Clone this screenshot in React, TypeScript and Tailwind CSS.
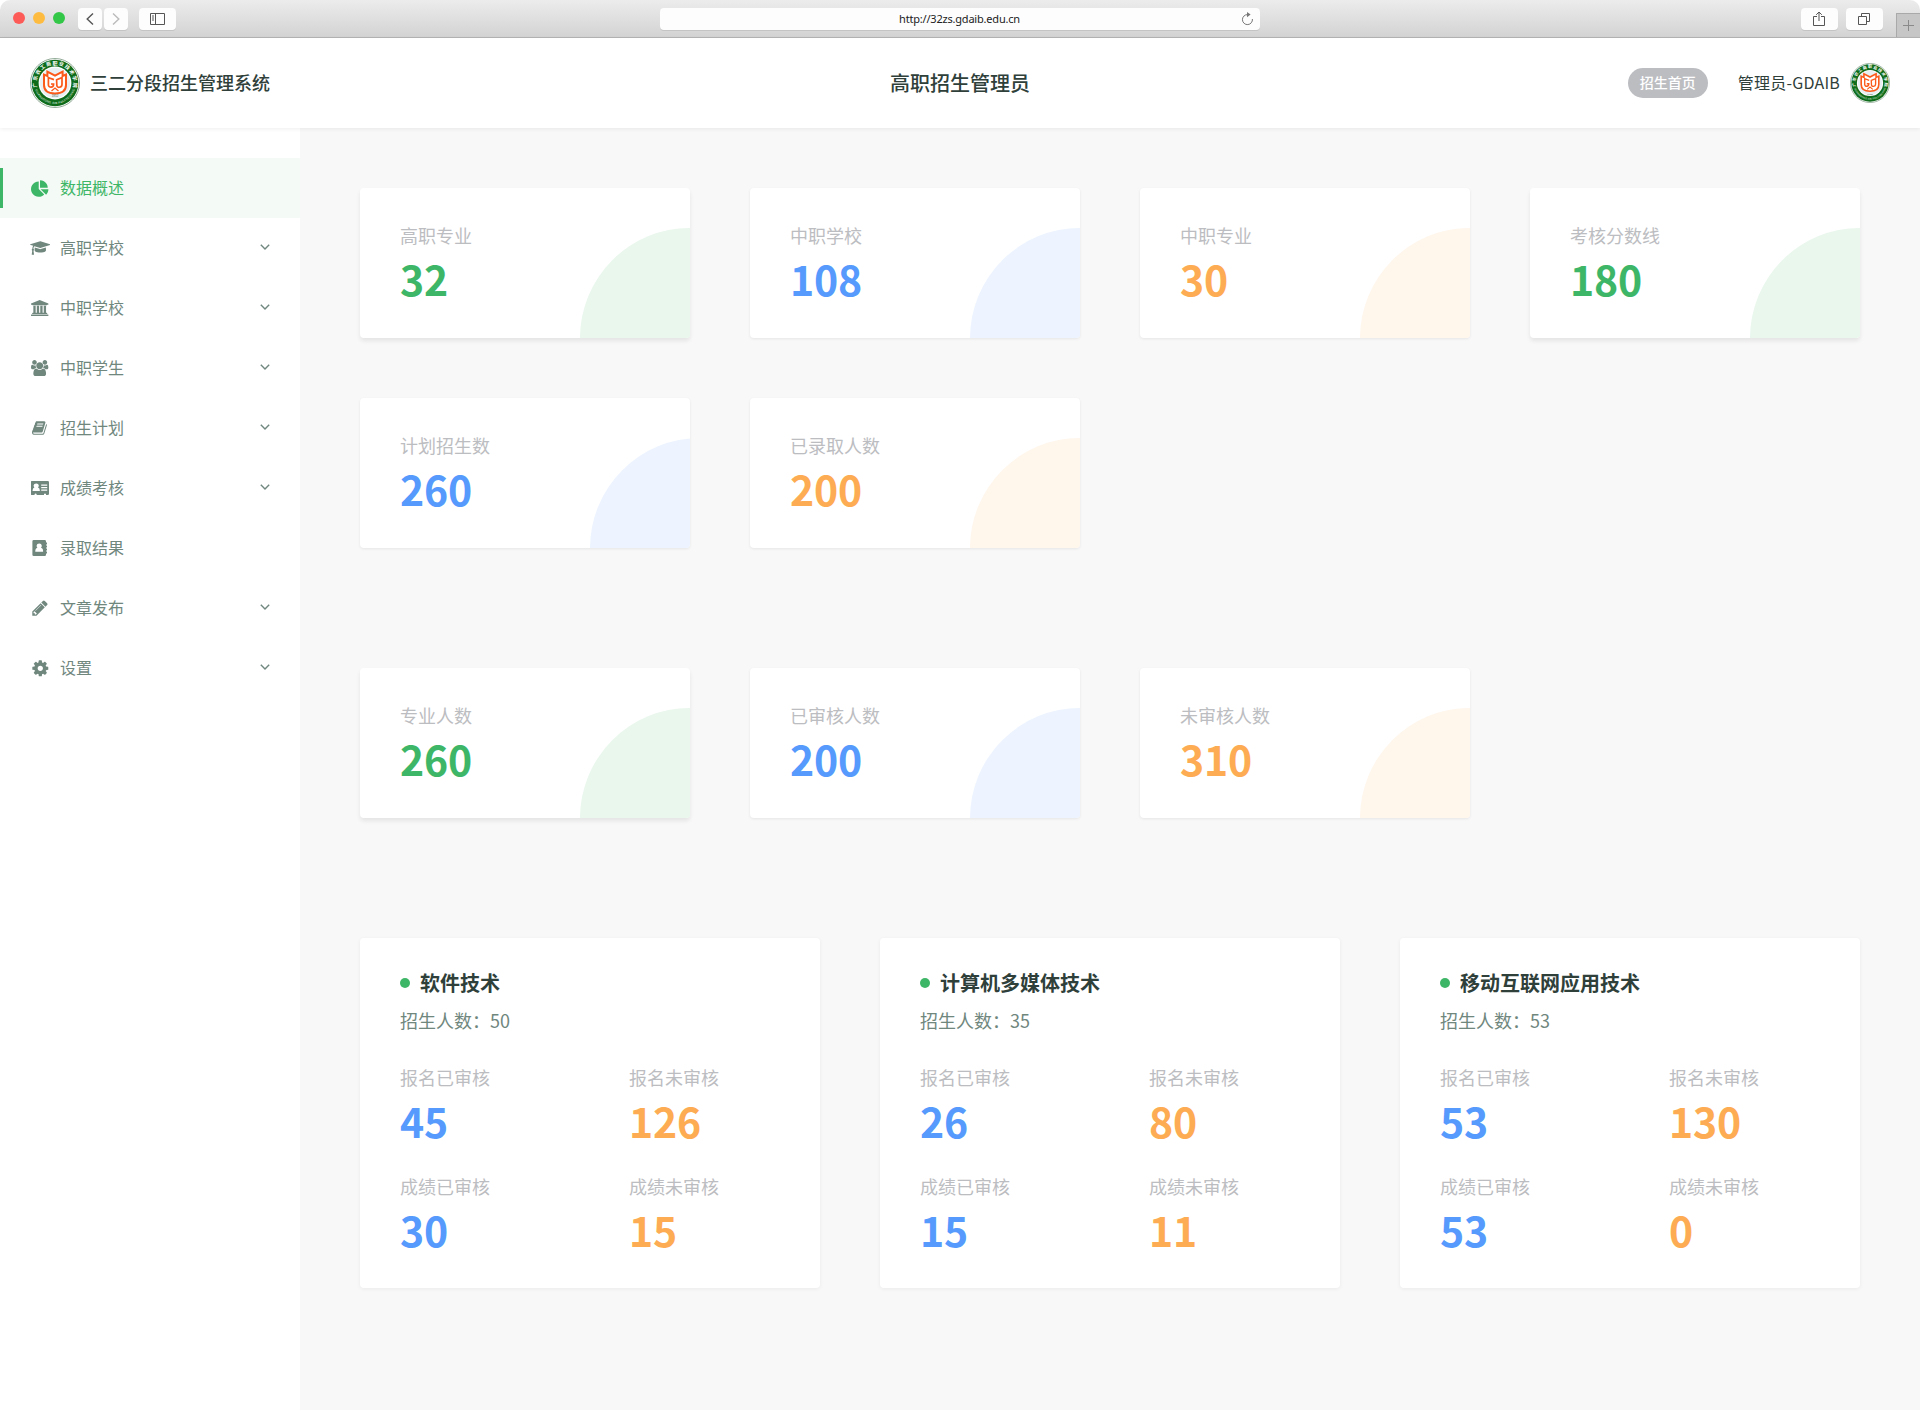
import React from "react";

type Tone = "green" | "blue" | "orange";

const TEXT: Record<Tone, string> = {
  green: "text-[#3eb667]",
  blue: "text-[#559afc]",
  orange: "text-[#fdac53]",
};
const FILL: Record<Tone, string> = {
  green: "bg-[#e9f7ed]",
  blue: "bg-[#edf4ff]",
  orange: "bg-[#fff6ec]",
};
const SHADOW: Record<Tone, string> = {
  green: "shadow-[0_3px_4px_rgba(0,0,0,0.08)]",
  blue: "shadow-[0_1px_3px_rgba(0,0,0,0.08)]",
  orange: "shadow-[0_1px_3px_rgba(0,0,0,0.08)]",
};

function Seal({ size }: { size: number }) {
  return (
    <svg width={size} height={size} viewBox="0 0 50 50">
      <defs>
        <path id="sealTop" d="M8.6 33 A18.3 18.3 0 1 1 41.4 33" />
        <path id="sealBottom" d="M4.4 28 A20.8 20.8 0 0 0 45.6 28" />
      </defs>
      <circle cx="25" cy="25" r="24.5" fill="#fff" stroke="#86a28c" strokeWidth="0.9" />
      <circle cx="25" cy="25" r="23.3" fill="#0d6b1a" />
      <circle cx="25" cy="25" r="16.4" fill="#fff" />
      <circle cx="25" cy="25" r="15.2" fill="#e9f0f4" />
      <text fontSize="5" fontWeight="700" fill="#fff" fontFamily="Noto Sans CJK SC, sans-serif">
        <textPath href="#sealTop" startOffset="4" textLength="66">广东农工商职业技术学院</textPath>
      </text>
      <text fontSize="3" fontWeight="700" fill="#b9d6bd" fontFamily="Liberation Sans, sans-serif">
        <textPath href="#sealBottom" startOffset="4" textLength="52">GUANGDONG AIB POLYTECHNIC</textPath>
      </text>
      <g fill="none" stroke="#fb5a1a" strokeWidth="2">
        <path d="M14 16.6 L17.4 18 V13.6 L25 17.6 L32.6 13.6 V18 L36 16.6 V27 C36 33 31 35.4 25 35.4 C19 35.4 14 33 14 27 Z" fill="#fff" />
        <path d="M24 21.6 L18.4 19.6 V27 C18.4 29.6 23.6 30.4 23.6 26 H21" strokeWidth="1.7" />
        <path d="M26.6 21.8 L32 19.6 V26.5 C32 29.6 26.8 30.6 26.8 27 Z" strokeWidth="1.7" />
        <path d="M21.5 33 L25 30 L28.5 33" strokeWidth="1.3" />
      </g>
      <text x="25" y="39.4" fontSize="3" textAnchor="middle" fill="#4d6b52" fontFamily="Liberation Sans, sans-serif">1952</text>
    </svg>
  );
}

function BrowserBar() {
  return (
    <div className="bg-white">
      <div className="flex h-[38px] shrink-0 items-start rounded-t-[10px] border-b border-[#b4b4b4] bg-linear-to-b from-[#ececec] to-[#d3d3d3] pt-2">
        <div className="ml-[13px] mt-1 flex gap-2">
          <span className="size-3 rounded-full bg-[#fc5b57]" />
          <span className="size-3 rounded-full bg-[#fdbc40]" />
          <span className="size-3 rounded-full bg-[#33c748]" />
        </div>
        <div className="ml-[13px] flex gap-0.5">
          <span className="flex h-[22px] w-6 items-center justify-center rounded bg-[#fdfdfd] shadow-[0_1px_0_#c4c4c4]">
            <svg width="8" height="12" viewBox="0 0 8 12" fill="none" stroke="#555" strokeWidth="1.4"><path d="M7 0.5 L1.2 6 L7 11.5" /></svg>
          </span>
          <span className="flex h-[22px] w-6 items-center justify-center rounded bg-[#fdfdfd] shadow-[0_1px_0_#c4c4c4]">
            <svg width="8" height="12" viewBox="0 0 8 12" fill="none" stroke="#bbb" strokeWidth="1.4"><path d="M1 0.5 L6.8 6 L1 11.5" /></svg>
          </span>
        </div>
        <span className="ml-[11px] flex h-[22px] w-[37px] items-center justify-center rounded bg-[#fdfdfd] shadow-[0_1px_0_#c4c4c4]">
          <svg width="15" height="12" viewBox="0 0 15 12" fill="none" stroke="#555"><path d="M0.5 0.5 H14.5 V11.5 H0.5 Z M5.5 0.5 V11.5 M2 3 H4 M2 5 H4 M2 7 H4" /></svg>
        </span>
        <div className="ml-[484px] flex h-[22px] w-[600px] items-center rounded bg-[#fdfdfd] pl-[18px] pr-[6px] shadow-[0_1px_0_#c4c4c4]">
          <span className="flex-1 pb-0.5 text-center font-['Noto_Sans'] text-[11px] leading-none tracking-[-0.2px] text-[#222]">http://32zs.gdaib.edu.cn</span>
          <svg width="13" height="14" viewBox="0 0 13 14" fill="none" stroke="#777"><path d="M6.5 2.6 A5 5 0 1 0 11.4 7" /><path d="M6 0 L9.6 2.6 L6 5.2 Z" fill="#777" stroke="none" /></svg>
        </div>
        <span className="ml-[541px] flex h-[22px] w-[37px] items-center justify-center rounded bg-[#fdfdfd] pr-px shadow-[0_1px_0_#c4c4c4]">
          <svg width="12" height="16" viewBox="0 0 12 16" fill="none" stroke="#555"><path d="M4 5.5 H0.5 V14.5 H11.5 V5.5 H8 M6 10 V1 M3.2 3.8 L6 1 L8.8 3.8" /></svg>
        </span>
        <span className="ml-2 flex h-[22px] w-[37px] items-center justify-center rounded bg-[#fdfdfd] pr-px shadow-[0_1px_0_#c4c4c4]">
          <svg width="12" height="12" viewBox="0 0 12 12" fill="none" stroke="#555"><path d="M0.5 3.5 H8.5 V11.5 H0.5 Z M3.5 3.5 V0.5 H11.5 V8.5 H8.5" /></svg>
        </span>
        <span className="ml-[13px] mt-[5px] flex h-6 w-6 items-center justify-center border-l border-t border-[#a9a9a9] bg-[#c6c6c6]">
          <svg width="11" height="11" viewBox="0 0 11 11" stroke="#8a8a8a"><path d="M0 5.5 H11 M5.5 0 V11" /></svg>
        </span>
      </div>
    </div>
  );
}

function Header() {
  return (
    <header className="relative z-10 grid h-[90px] shrink-0 grid-cols-3 items-center bg-white px-[30px] text-[#2f403a] shadow-[0_1px_4px_rgba(0,0,0,0.07)]">
      <div className="flex items-center gap-[10px]">
        <Seal size={50} />
        <span className="pb-0.5 text-lg font-medium">三二分段招生管理系统</span>
      </div>
      <h1 className="text-center text-xl font-medium">高职招生管理员</h1>
      <div className="flex items-center justify-end">
        <span className="flex h-[30px] w-20 items-center justify-center rounded-full bg-[#bcbdc1] pb-0.5 text-sm font-medium text-white">招生首页</span>
        <span className="ml-[30px] mr-[10px] pb-0.5 text-base tracking-[0.2px]">管理员-GDAIB</span>
        <Seal size={40} />
      </div>
    </header>
  );
}

const MENU = [
  {
    label: "数据概述", open: false, box: "0 0 1728 1664", w: 17.4, h: 17,
    d: "M768 890l546 546q-106 108-247.500 168t-298.500 60q-209 0-385.500-103t-279.500-279.500-103-385.500 103-385.500 279.500-279.500 385.500-103v762zm187 6h773q0 157-60 298.500t-168 247.500zm709-128h-768v-768q209 0 385.500 103t279.500 279.500 103 385.500z",
  },
  {
    label: "高职学校", open: true, box: "0 0 2304 1792", w: 20.6, h: 16,
    d: "M1774 836l18 316q4 69-82 128t-235 93.500-323 34.500-323-34.500-235-93.500-82-128l18-316 574 181q22 7 48 7t48-7zm530-324q0 23-22 31l-1120 352q-4 1-10 1t-10-1l-652-206q-43 34-71 111.500t-34 178.500q63 36 63 109 0 69-58 107l58 433q2 14-8 25-9 11-24 11h-192q-15 0-24-11-10-11-8-25l58-433q-58-38-58-107 0-73 65-111 11-207 98-330l-333-104q-22-8-22-31t22-31l1120-352q4-1 10-1t10 1l1120 352q22 8 22 31z",
  },
  {
    label: "中职学校", open: true, box: "0 0 1920 1792", w: 17.4, h: 16.2,
    d: "M960 0l960 384v128h-128q0 26-20.500 45t-48.500 19h-1526q-28 0-48.500-19t-20.500-45h-128v-128zm-704 640h256v768h128v-768h256v768h128v-768h256v768h128v-768h256v768h59q28 0 48.500 19t20.500 45v64h-1664v-64q0-26 20.500-45t48.500-19h59v-768zm1595 960q28 0 48.500 19t20.500 45v128h-1920v-128q0-26 20.500-45t48.500-19h1782z",
  },
  {
    label: "中职学生", open: true, box: "0 0 1920 1792", w: 17.4, h: 16.2,
    d: "M593 896q-162 5-265 128h-134q-82 0-138-40.500t-56-118.500q0-353 124-353 6 0 43.500 21t97.500 42.500 119 21.500q67 0 133-23-5 37-5 66 0 139 81 256zm1071 637q0 120-73 189.500t-194 69.500h-874q-121 0-194-69.500t-73-189.500q0-53 3.500-103.500t14-109 26.500-108.500 43-97.500 62-81 85.500-53.500 111.500-20q10 0 43 21.500t73 48 107 48 135 21.500 135-21.500 107-48 73-48 43-21.500q61 0 111.500 20t85.500 53.500 62 81 43 97.500 26.500 108.500 14 109 3.500 103.500zm-1024-1277q0 106-75 181t-181 75-181-75-75-181 75-181 181-75 181 75 75 181zm704 384q0 159-112.500 271.500t-271.500 112.500-271.500-112.500-112.500-271.500 112.500-271.500 271.500-112.500 271.500 112.500 112.500 271.500zm576 225q0 78-56 118.500t-138 40.500h-134q-103-123-265-128 81-117 81-256 0-29-5-66 66 23 133 23 59 0 119-21.500t97.500-42.500 43.500-21q124 0 124 353zm-128-609q0 106-75 181t-181 75-181-75-75-181 75-181 181-75 181 75 75 181z",
  },
  {
    label: "招生计划", open: true, box: "0 0 1792 1792", w: 16, h: 16,
    d: "M1639 478q40 57 18 129l-275 906q-19 64-76.500 107.500t-122.500 43.500h-923q-77 0-148.500-53.500t-99.500-131.500q-24-67-2-127 0-4 3-27t4-37q1-8-3-21.500t-3-19.500q2-11 8-21t16.500-23.500 16.500-23.500q23-38 45-91.500t30-91.500q3-10 .5-30t-.5-28q3-11 17-28t17-23q21-36 42-92t25-90q1-9-2.500-32t.5-28q4-13 22-30.500t22-22.500q19-26 42.500-84.500t27.500-96.500q1-8-3-25.500t-2-26.500q2-8 9-18t18-23 17-21q8-12 16.500-30.500t15-35 16-36 19.500-32 26.500-23.500 36-11.500 47.500 5.500l-1 3q38-9 51-9h761q74 0 114 56t18 130l-274 906q-36 119-71.500 153.500t-128.500 34.500h-869q-27 0-38 15-11 16-1 43 24 70 144 70h923q29 0 56-15.500t35-41.500l300-987q7-22 5-57 38 15 59 43zm-1064 2q-4 13 2 22.500t20 9.500h608q13 0 25.500-9.500t16.500-22.500l21-64q4-13-2-22.500t-20-9.500h-608q-13 0-25.500 9.500t-16.500 22.500zm-83 256q-4 13 2 22.500t20 9.500h608q13 0 25.500-9.500t16.500-22.500l21-64q4-13-2-22.500t-20-9.500h-608q-13 0-25.500 9.500t-16.500 22.500z",
  },
  {
    label: "成绩考核", open: true, box: "0.4 0 19 14", w: 19, h: 14,
    d: "M1.2 0H17.2Q18.4 0 18.4 1.2V12.8Q18.4 14 17.2 14H15.4V13Q14.4 12 13.4 13V14H6V13Q5 12 4 13V14H1.2Q0 14 0 12.800V1.200Q0 0 1.200 0ZM2 10H9.200Q9.400 6.800 7.400 6.400Q8.200 5.600 8.200 4.500Q8 2.600 5.600 2.500Q3.200 2.600 3 4.500Q3 5.600 3.800 6.400Q1.800 6.800 2 10ZM10.600 3.500V4.700H16.600V3.500ZM10.600 6V7.200H16.600V6ZM10.600 8.500V9.700H16.600V8.500Z",
  },
  {
    label: "录取结果", open: false, box: "0 0 18 16", w: 18, h: 16,
    d: "M2.700 0H13.700Q15 0 15 1.300V2.500H16V4.500H15V5.500H16V7.500H15V8.500H16V10.500H15V11.500H16V13.500H15V14.700Q15 16 13.700 16H2.700Q1.400 16 1.400 14.700V1.300Q1.400 0 2.700 0ZM4.300 11.800H12.100Q12.300 8.200 10 7.800Q10.800 7 10.800 5.800Q10.600 3.700 8.200 3.600Q5.800 3.700 5.600 5.800Q5.600 7 6.400 7.800Q4.100 8.200 4.300 11.800Z",
  },
  {
    label: "文章发布", open: true, box: "0 0 1792 1792", w: 18, h: 18,
    d: "M491 1536l91-91-235-235-91 91v107h128v128h107zm523-928q0-22-22-22-10 0-17 7l-542 542q-7 7-7 17 0 22 22 22 10 0 17-7l542-542q7-7 7-17zm-54-192l416 416-832 832h-416v-416zm683 96q0 53-37 90l-166 166-416-416 166-165q36-38 90-38 53 0 91 38l235 234q37 39 37 91z",
  },
  {
    label: "设置", open: true, box: "0 0 1792 1792", w: 18.6, h: 18.6,
    d: "M1152 896q0-106-75-181t-181-75-181 75-75 181 75 181 181 75 181-75 75-181zm512-109v222q0 12-8 23t-20 13l-185 28q-19 54-39 91 35 50 107 138 10 12 10 25t-9 23q-27 37-99 108t-94 71q-12 0-26-9l-138-108q-44 23-91 38-16 136-29 186-7 28-36 28h-222q-14 0-24.500-8.500t-11.500-21.500l-28-184q-49-16-90-37l-141 107q-10 9-25 9-14 0-25-11-126-114-165-168-7-10-7-23 0-12 8-23 15-21 51-66.500t54-70.500q-27-50-41-99l-183-27q-13-2-21-12.500t-8-23.500v-222q0-12 8-23t19-13l186-28q14-46 39-92-40-57-107-138-10-12-10-24 0-10 9-23 26-36 98.500-107.500t94.500-71.500q13 0 26 10l138 107q44-23 91-38 16-136 29-186 7-28 36-28h222q14 0 24.500 8.500t11.500 21.500l28 184q49 16 90 37l142-107q9-9 24-9 13 0 25 10 129 119 165 170 7 8 7 22 0 12-8 23-15 21-51 66.500t-54 70.500q26 50 41 98l183 28q13 2 21 12.500t8 23.500z",
  },
];

function Sidebar() {
  return (
    <nav className="w-[300px] shrink-0 bg-white pt-[30px] shadow-[1px_0_3px_rgba(0,0,0,0.03)]">
      {MENU.map(({ label, open, box, w, h, d }, i) => (
        <div key={label} className={i === 0 ? "flex h-[60px] items-center bg-[#f4faf6] text-[#3eb667]" : "flex h-[60px] items-center text-[#70877e]"}>
          <span className={i === 0 ? "h-10 w-[3px] bg-[#3eb667]" : "h-10 w-[3px]"} />
          <span className="ml-[26px] flex w-[22px] justify-center">
            <svg width={w} height={h} viewBox={box} fill="currentColor" fillRule="evenodd" className="shrink-0"><path d={d} /></svg>
          </span>
          <span className="ml-[9px] flex-1 pb-0.5 text-base">{label}</span>
          {open && (
            <svg className="mb-0.5 mr-[30px]" width="10" height="7" viewBox="0 0 10 7" fill="none" stroke="currentColor" strokeWidth="1.4"><path d="M0.8 0.8 L5 5 L9.2 0.8" /></svg>
          )}
        </div>
      ))}
    </nav>
  );
}

function Figure({ label, value, tone }: { label: string; value: string; tone: Tone }) {
  return (
    <div className="flex flex-col">
      <span className="text-lg leading-[26px] text-[#bcbdc1]">{label}</span>
      <span className={`mt-0.5 text-[41px] font-bold leading-[56px] tracking-[-0.2px] ${TEXT[tone]}`}>{value}</span>
    </div>
  );
}

function StatCard({ label, value, tone, narrow }: { label: string; value: string; tone: Tone; narrow?: boolean }) {
  return (
    <div className={`flex h-[150px] justify-between overflow-hidden rounded bg-white pl-10 ${SHADOW[tone]}`}>
      <div className="pt-[34px]"><Figure label={label} value={value} tone={tone} /></div>
      <div className={`h-[110px] self-end overflow-hidden ${narrow ? "w-[100px]" : "w-[110px]"}`}>
        <div className={`size-[220px] rounded-full ${FILL[tone]}`} />
      </div>
    </div>
  );
}

const MAJORS = [
  { name: "软件技术", quota: 50, values: ["45", "126", "30", "15"] },
  { name: "计算机多媒体技术", quota: 35, values: ["26", "80", "15", "11"] },
  { name: "移动互联网应用技术", quota: 53, values: ["53", "130", "53", "0"] },
];
const FIELDS = ["报名已审核", "报名未审核", "成绩已审核", "成绩未审核"];

export default function App() {
  return (
    <div className="flex h-[1410px] w-[1920px] flex-col overflow-hidden bg-white font-['Noto_Sans_CJK_SC',sans-serif]">
      <BrowserBar />
      <Header />
      <div className="flex flex-1">
        <Sidebar />
        <main className="flex-1 bg-[#f8f8f8] px-[60px] pt-[60px]">
          <section className="grid grid-cols-4 gap-[60px]">
            <StatCard label="高职专业" value="32" tone="green" />
            <StatCard label="中职学校" value="108" tone="blue" />
            <StatCard label="中职专业" value="30" tone="orange" />
            <StatCard label="考核分数线" value="180" tone="green" />
            <StatCard label="计划招生数" value="260" tone="blue" narrow />
            <StatCard label="已录取人数" value="200" tone="orange" />
          </section>
          <section className="mt-[120px] grid grid-cols-4 gap-[60px]">
            <StatCard label="专业人数" value="260" tone="green" />
            <StatCard label="已审核人数" value="200" tone="blue" />
            <StatCard label="未审核人数" value="310" tone="orange" />
          </section>
          <section className="mt-[120px] grid grid-cols-3 gap-[60px]">
            {MAJORS.map((m) => (
              <article key={m.name} className="h-[350px] rounded bg-white px-10 pt-[30px] shadow-[0_1px_4px_rgba(0,0,0,0.06)]">
                <h2 className="flex items-center gap-[10px] text-xl font-bold leading-[30px] text-[#2f403a]">
                  <span className="size-[10px] rounded-full bg-[#3eb667]" />
                  {m.name}
                </h2>
                <p className="mt-[9px] text-lg leading-[26px] text-[#70877e]">招生人数：{m.quota}</p>
                <div className="mt-[31px] grid grid-cols-[229px_1fr] gap-y-[25px]">
                  {FIELDS.map((f, i) => (
                    <Figure key={f} label={f} value={m.values[i]} tone={i % 2 === 0 ? "blue" : "orange"} />
                  ))}
                </div>
              </article>
            ))}
          </section>
        </main>
      </div>
    </div>
  );
}
